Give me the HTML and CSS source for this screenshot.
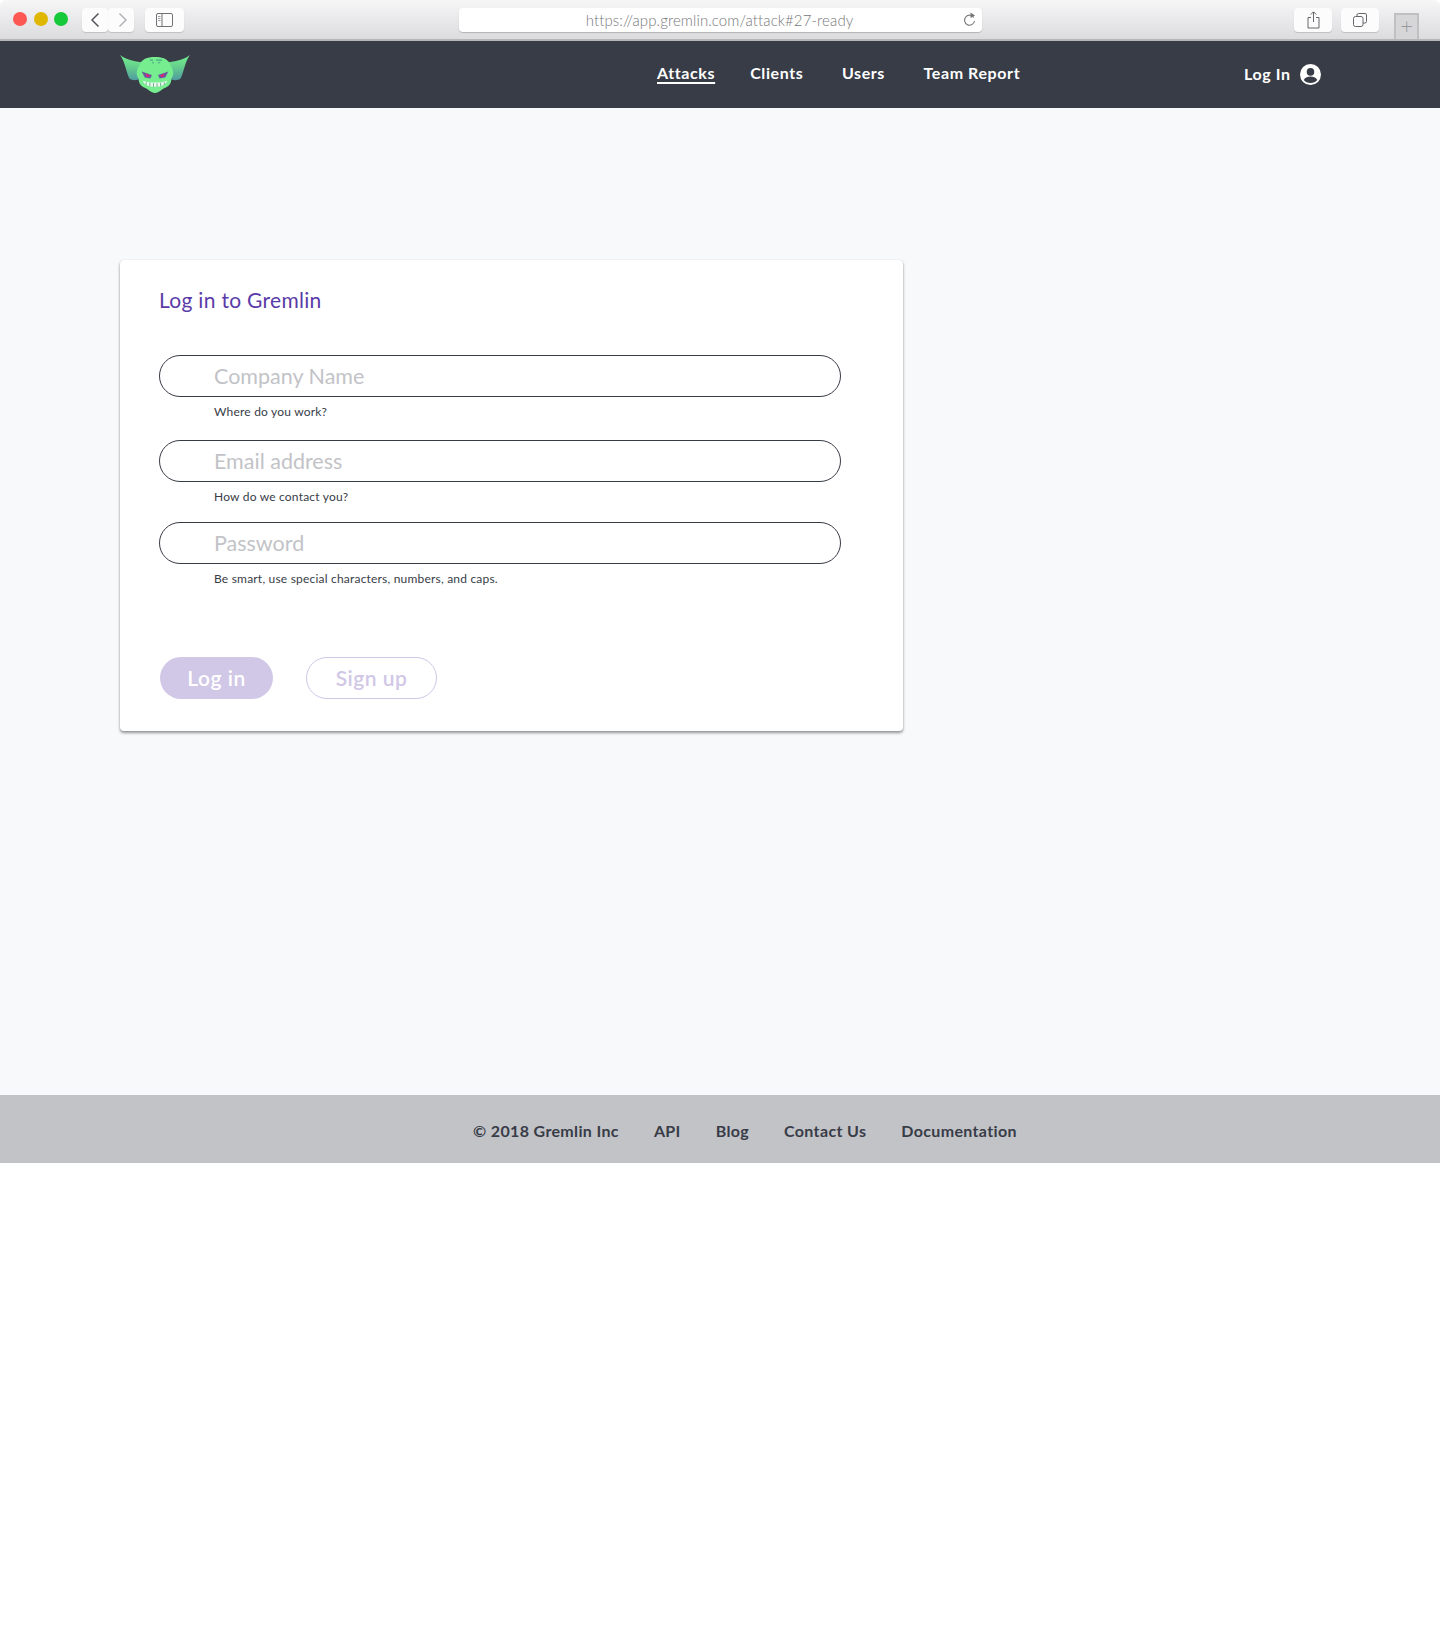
FILE: index.html
```html
<!DOCTYPE html>
<html lang="en">

<head>
    <meta charset="UTF-8">
    <title>Gremlin - Log in</title>
    <link rel="stylesheet" href="styles.css">
</head>

<body>
    <!-- browser window bar -->
    <div class="chrome">
        <span class="dot dot-red"></span>
        <span class="dot dot-yellow"></span>
        <span class="dot dot-green"></span>
        <div class="tool tool-back">
            <svg width="12" height="16" viewBox="0 0 12 16"><path d="M9.5 1.5 3 8l6.500 6.500" fill="none" stroke="#55565c" stroke-width="1.500"/></svg>
        </div>
        <div class="tool tool-forward">
            <svg width="12" height="16" viewBox="0 0 12 16"><path d="M2.500 1.500 9 8l-6.500 6.500" fill="none" stroke="#b4b4b8" stroke-width="1.500"/></svg>
        </div>
        <div class="tool tool-sidebar">
            <svg width="17" height="14" viewBox="0 0 17 14"><rect x="0.500" y="0.500" width="16" height="13" rx="1.500" fill="none" stroke="#707075"/><path d="M6 .5v13" stroke="#707075"/><path d="M2 3.500h2.500M2 5.500h2.500M2 7.500h2.500" stroke="#a0a0a4"/></svg>
        </div>
        <div class="url">
            <span class="url-text">https://app.gremlin.com/attack#27-ready</span>
            <svg class="reload" width="13" height="15" viewBox="0 0 13 15"><path d="M10.800 5.500A5 5 0 1 0 11.500 9" fill="none" stroke="#77777b" stroke-width="1.100"/><path d="M7.500 0.500 12 3.500 7.500 6z" fill="#77777b"/></svg>
        </div>
        <div class="tool tool-share">
            <svg width="13" height="18" viewBox="0 0 13 18"><path d="M4 6.500H1v10.500h11V6.500H9" fill="none" stroke="#66666b"/><path d="M6.500 11V1M3.800 3.500 6.500.8l2.700 2.700" fill="none" stroke="#66666b"/></svg>
        </div>
        <div class="tool tool-tabs">
            <svg width="14" height="14" viewBox="0 0 14 14"><rect x="0.500" y="3.500" width="9.500" height="10" rx="2" fill="none" stroke="#66666b"/><path d="M4 3.500V2A1.500 1.500 0 0 1 5.500.5h6.500A1.500 1.500 0 0 1 13.500 2v6.500A1.500 1.500 0 0 1 12 10h-2" fill="none" stroke="#66666b"/></svg>
        </div>
        <div class="new-tab">+</div>
    </div>

    <header class="topbar">
        <a class="logo" href="#">
            <svg width="70" height="39" viewBox="0 0 68 38">
                <defs>
                    <linearGradient id="wing" x1="0" y1="0" x2="0" y2="1">
                        <stop offset="0" stop-color="#74ef8f"/>
                        <stop offset="0.450" stop-color="#66d08c"/>
                        <stop offset="1" stop-color="#4f9aa0"/>
                    </linearGradient>
                </defs>
                <path d="M0 0C5 4 12 6 21 7L20 23C16 25 12 25 9 23C6 17 5 7 0 0Z" fill="url(#wing)"/>
                <path d="M68 0C63 4 56 6 47 7L48 23C52 25 56 25 59 23C62 17 63 7 68 0Z" fill="url(#wing)"/>
                <path d="M34 2C42 2 47 4 49 10C52 14 53 19 50 23C50 28 47 31 44 32C41 33 38 37 34 37C30 37 27 33 24 32C21 31 18 28 18 23C15 19 16 14 19 10C21 4 26 2 34 2Z" fill="#76ee90"/>
                <path d="M29 5h3M35 5h6M31 7.500h2M37 7.500h2" stroke="#4aa583" stroke-width="1.100"/>
                <path d="M21 16 31 19.500 29.500 23 24 22Z" fill="#6a5a9c"/>
                <path d="M47 16 37 19.500 38.500 23 44 22Z" fill="#6a5a9c"/>
                <path d="M25 18 29.500 20.500 26 21.500Z" fill="#ec1c7a"/>
                <path d="M43 18 38.500 20.500 42 21.500Z" fill="#ec1c7a"/>
                <path d="M22 25C28 27.500 40 27.500 46 25 44 29.500 39 31 34 31 29 31 24 29.500 22 25Z" fill="#eef8ee"/>
                <path d="M25.500 26.500v2.500M29 27v3.500M32.500 27.500v3.500M36 27.500v3.500M39.500 27v3.500M43 26.500v2.500" stroke="#4b9f78" stroke-width="0.800"/>
            </svg>
        </a>
        <nav class="main-nav">
            <a class="nav-link active" href="#">Attacks</a>
            <a class="nav-link" href="#">Clients</a>
            <a class="nav-link" href="#">Users</a>
            <a class="nav-link" href="#">Team Report</a>
        </nav>
        <a class="login-link" href="#">
            Log In
            <svg class="login-icon" width="21" height="21" viewBox="0 0 20 20"><circle cx="10" cy="10" r="10" fill="#fff"/><circle cx="10" cy="7.500" r="3.600" fill="#383c47"/><path d="M3.500 15.200C5 12.800 7.500 12 10 12s5 .8 6.500 3.200C15 17 12.700 18 10 18s-5-1-6.500-2.800Z" fill="#383c47"/></svg>
        </a>
    </header>

    <main class="content">
        <section class="card">
            <h2 class="card-title">Log in to Gremlin</h2>
            <form>
                <div class="field">
                    <input class="field-input" type="text" placeholder="Company Name">
                    <p class="field-help">Where do you work?</p>
                </div>
                <div class="field field-tight">
                    <input class="field-input" type="text" placeholder="Email address">
                    <p class="field-help">How do we contact you?</p>
                </div>
                <div class="field">
                    <input class="field-input" type="password" placeholder="Password">
                    <p class="field-help">Be smart, use special characters, numbers, and caps.</p>
                </div>
                <div class="actions">
                    <button type="button" class="btn btn-login">Log in</button>
                    <button type="button" class="btn btn-signup">Sign up</button>
                </div>
            </form>
        </section>
    </main>

    <footer class="footer">
        <span>© 2018 Gremlin Inc</span>
        <a href="#">API</a>
        <a href="#">Blog</a>
        <a href="#">Contact Us</a>
        <a href="#">Documentation</a>
    </footer>
</body>

</html>
```

FILE: styles.css
```css
* {
    margin: 0;
    padding: 0;
    box-sizing: border-box;
}

html {
    background-color: #ffffff;
    color: #383c47;
    font-family: 'Lato', 'Liberation Sans', sans-serif;
    font-size: 16px;
}

a {
    color: inherit;
    text-decoration: none;
}

/* browser bar */
.chrome {
    display: flex;
    align-items: flex-start;
    height: 41px;
    padding: 8px 0 0 13px;
    background: linear-gradient(#f6f6f7, #dcdbde);
    border-bottom: 2px solid #b6b6b8;
    border-radius: 6px 6px 0 0;
}

.dot {
    width: 14px;
    height: 14px;
    margin: 4px 6.7px 0 0;
    border-radius: 50%;
}

.dot-red {
    background-color: #fc5753;
}

.dot-yellow {
    background-color: #dfb700;
}

.dot-green {
    background-color: #15c93a;
}

.tool {
    display: flex;
    align-items: center;
    justify-content: center;
    height: 24px;
    background-color: #fcfcfc;
    border-radius: 4px;
    box-shadow: 0 1px 1px rgba(0, 0, 0, 0.15);
}

.tool-back {
    width: 26px;
    margin-left: 7px;
}

.tool-forward {
    width: 26px;
    padding-left: 3px;
}

.tool-sidebar {
    width: 39px;
    margin-left: 11px;
}

.url {
    display: flex;
    align-items: center;
    justify-content: center;
    position: relative;
    width: 523px;
    height: 24px;
    margin-left: 275px;
    background-color: #ffffff;
    border-radius: 4px;
    box-shadow: 0 1px 1px rgba(0, 0, 0, 0.2);
}

.url-text {
    margin-right: 2px;
    color: #77777a;
    font-size: 15px;
    font-weight: 300;
    letter-spacing: 0.1px;
}

.reload {
    position: absolute;
    top: 4px;
    right: 6px;
}

.tool-share {
    width: 38px;
    margin-left: 312px;
}

.tool-tabs {
    width: 38px;
    margin-left: 9px;
}

.new-tab {
    width: 25px;
    height: 26px;
    margin: 5px 0 0 15px;
    border: 2px solid #c0c0c2;
    border-bottom: none;
    background-color: #d6d6d8;
    color: #98989b;
    font-size: 22px;
    font-weight: 300;
    line-height: 22px;
    text-align: center;
}

/* top nav */
.topbar {
    display: flex;
    align-items: center;
    height: 67px;
    padding: 0 0 2px 120px;
    background-color: #383c47;
    color: #ffffff;
    font-weight: 700;
    letter-spacing: 0.6px;
}

.logo {
    display: flex;
    width: 537px;
    margin-top: 2px;
}

.main-nav {
    display: flex;
    width: 587px;
    gap: 38.5px;
    margin-bottom: 2px;
}

.nav-link.active {
    margin-right: -3.5px;
    text-decoration: underline;
    text-decoration-thickness: 2px;
    text-underline-offset: 3px;
}

.login-link {
    display: flex;
    align-items: center;
    gap: 9px;
}

.login-icon {
    margin-top: 2px;
}

/* page body */
.content {
    height: 987px;
    padding: 152px 0 0 120px;
    background-color: #f8f9fb;
}

.card {
    width: 783px;
    height: 471px;
    padding: 27px 39px;
    background-color: #ffffff;
    border-radius: 4px;
    box-shadow: 0 2px 3px rgba(0, 0, 0, 0.4), 0 0 1px rgba(0, 0, 0, 0.2);
}

.card-title {
    margin-bottom: 42px;
    color: #5a3ba8;
    font-size: 21px;
    font-weight: 400;
    letter-spacing: 0.3px;
    line-height: 26px;
}

.field {
    width: 682px;
    margin-bottom: 18px;
}

.field-tight {
    margin-bottom: 15px;
}

.field-input {
    display: block;
    width: 100%;
    height: 42px;
    padding: 0 54px;
    border: 1px solid #383c47;
    border-radius: 21px;
    outline: none;
    font-family: inherit;
    font-size: 21.5px;
}

.field-input::placeholder {
    color: #c2c3c7;
    opacity: 1;
}

.field-help {
    height: 25px;
    padding: 7px 0 0 55px;
    font-size: 12px;
    letter-spacing: 0.2px;
    line-height: 15px;
}

.actions {
    display: flex;
    gap: 33px;
    margin-top: 68px;
    padding-left: 1px;
}

.btn {
    height: 42px;
    padding-bottom: 1px;
    border-radius: 21px;
    font-family: inherit;
    font-size: 21px;
    font-weight: 600;
    letter-spacing: 0.5px;
}

.btn-login {
    width: 113px;
    border: none;
    background-color: #d1c7e6;
    color: #ffffff;
}

.btn-signup {
    width: 131px;
    border: 1px solid #d1c7e6;
    background-color: #ffffff;
    color: #d1c7e6;
}

/* footer */
.footer {
    display: flex;
    align-items: center;
    gap: 35px;
    height: 68px;
    padding: 3px 0 0 473px;
    background-color: #c2c3c7;
    font-weight: 700;
    letter-spacing: 0.35px;
}
```
